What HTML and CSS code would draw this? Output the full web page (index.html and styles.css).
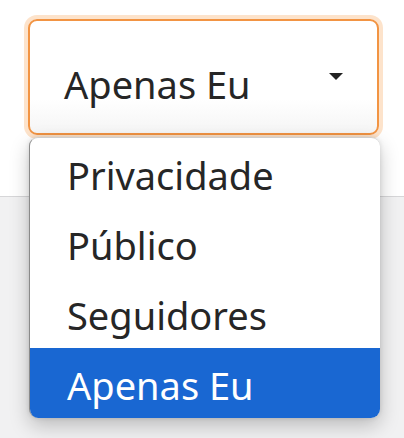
FILE: index.html
```html
<!DOCTYPE html>
<html lang="pt">
<head>
<meta charset="utf-8">
<link rel="stylesheet" href="styles.css">
</head>
<body>
<div class="page">
  <div class="top"></div>
  <div class="bottom"></div>
  <div class="select-wrap">
    <div class="select">
      <span class="value">Apenas Eu</span>
      <svg class="caret" width="16" height="9" viewBox="0 0 16 9"><path d="M1 1 L15 1 L8 8 Z" fill="#222"/></svg>
    </div>
    <ul class="menu">
      <li class="item">Privacidade</li>
      <li class="item">Público</li>
      <li class="item">Seguidores</li>
      <li class="item selected">Apenas Eu</li>
    </ul>
  </div>
</div>
</body>
</html>
```
FILE: styles.css
```css
html, body {
  margin: 0;
  padding: 0;
}
body {
  width: 404px;
  height: 438px;
  overflow: hidden;
  font-family: "Noto Sans", "Open Sans", sans-serif;
}
.page {
  position: relative;
  width: 404px;
  height: 438px;
  display: flex;
  flex-direction: column;
}
.top {
  height: 196px;
  background: #ffffff;
  border-bottom: 1px solid #d6d6d8;
}
.bottom {
  flex: 1;
  background: #f1f1f2;
}
.select-wrap {
  position: absolute;
  left: 28px;
  top: 19px;
  width: 352px;
}
.select {
  box-sizing: border-box;
  width: 351px;
  height: 116px;
  border: 2px solid #f29443;
  border-radius: 9px;
  box-shadow: 0 0 0 4px #fde3cb;
  background: linear-gradient(#ffffff 70%, #f5f5f5);
  display: flex;
  align-items: center;
  justify-content: space-between;
  padding: 14px 33px 0 34px;
  color: #262626;
  font-size: 38px;
}
.value {
  line-height: 1;
}
.caret {
  margin-top: -16px;
}
.menu {
  list-style: none;
  margin: 2px 0 0 1px;
  padding: 0;
  width: 351px;
  box-sizing: border-box;
  background: #fff;
  border-left: 1px solid #8a8a8a;
  border-top: 1px solid #cfcfcf;
  border-radius: 9px;
  overflow: hidden;
  box-shadow: 0 8px 20px rgba(0,0,0,0.22), 0 0 5px rgba(0,0,0,0.12);
}
.item {
  height: 70px;
  line-height: 70px;
  padding: 2px 0 0 37px;
  box-sizing: border-box;
  font-size: 38px;
  color: #262626;
}
.item.selected {
  background: #1967d2;
  color: #fff;
}
```
